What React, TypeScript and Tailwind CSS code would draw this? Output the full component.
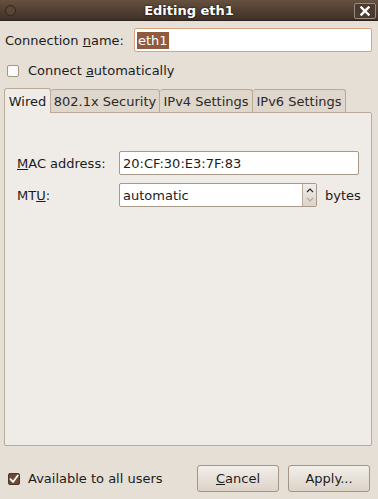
import React from 'react'

const font = { fontFamily: '"DejaVu Sans", "Noto Sans", sans-serif' }

function Tab({ label, active, w }: { label: string; active?: boolean; w: string }) {
  return active ? (
    <div className={`${w} h-[25px] -mb-px z-10 flex items-center justify-center rounded-t-[3px] border border-b-0 border-[#b9aa9a] bg-[#efebe7]`}>
      {label}
    </div>
  ) : (
    <div className={`${w} h-[23px] flex items-center justify-center rounded-t-[3px] border border-b-0 border-l-0 border-[#b9aa9a] bg-[#dfd6cc] text-[#2a2a2a]`}>
      {label}
    </div>
  )
}

function Checkbox({ checked }: { checked?: boolean }) {
  return checked ? (
    <div className="w-[12px] h-[12px] rounded-[2px] bg-[#6e4a36] border border-[#4f3426] flex items-center justify-center">
      <svg width="10" height="10" viewBox="0 0 10 10">
        <path d="M1.5 5.2 L4 8 L8.8 1.5" stroke="#fff" strokeWidth="1.8" fill="none" strokeLinecap="round" strokeLinejoin="round" />
      </svg>
    </div>
  ) : (
    <div className="w-[12px] h-[12px] rounded-[2px] bg-[#fbfaf9] border border-[#a49585]" />
  )
}

export default function App() {
  return (
    <div className="w-[378px] h-[499px] bg-[#e6dfd6] flex flex-col text-[13px] text-[#1c1c1c] leading-none overflow-hidden" style={font}>
      {/* Title bar */}
      <div className="h-[21px] relative flex items-center justify-center bg-gradient-to-b from-[#66513f] to-[#3f3027] border-b border-[#2d221b]">
        <div className="absolute left-[5px] top-[5px] w-[11px] h-[11px] rounded-full border border-[#2f241e] bg-[#5a4636]" />
        <span className="font-bold text-white" style={{ textShadow: '0 0 2px #000' }}>Editing eth1</span>
        <div className="absolute right-[2px] top-[3px] w-[22px] h-[16px] rounded-[2px] border border-[#9a8a7d] bg-[#4b3a2f] flex items-center justify-center">
          <svg width="10" height="10" viewBox="0 0 10 10">
            <path d="M1.5 1.5 L8.5 8.5 M8.5 1.5 L1.5 8.5" stroke="#fff" strokeWidth="2.4" strokeLinecap="square" />
          </svg>
        </div>
      </div>

      {/* Connection name */}
      <div className="mt-[7px] flex items-center pl-[5px] pr-[6px]">
        <span className="w-[129px]">Connection <u>n</u>ame:</span>
        <div className="flex-1 h-[24px] rounded-[2px] border border-[#d9a283] bg-white flex items-center pl-[2px]">
          <span className="bg-[#8f5a3d] text-white px-[1px] py-[2px]">eth1</span>
        </div>
      </div>

      {/* Connect automatically */}
      <div className="mt-[12px] flex items-center gap-[9px] pl-[7px]">
        <Checkbox />
        <span>Connect <u>a</u>utomatically</span>
      </div>

      {/* Tabs */}
      <div className="mt-[11px] mx-[4px] flex flex-col">
        <div className="flex items-end">
          <Tab label="Wired" active w="w-[47px]" />
          <Tab label="802.1x Security" w="w-[109px]" />
          <Tab label="IPv4 Settings" w="w-[93px]" />
          <Tab label="IPv6 Settings" w="w-[93px]" />
        </div>
        <div className="w-[368px] h-[334px] border border-[#b9aa9a] rounded-b-[2px] rounded-tr-[2px] bg-[#efebe7] pt-[38px] pl-[12px] pr-[4px] flex flex-col gap-[8px]">
          <div className="flex items-center">
            <span className="w-[102px] shrink-0"><u>M</u>AC address:</span>
            <div className="w-[240px] shrink-0 h-[24px] rounded-[2px] border border-[#a8998a] bg-white flex items-center pl-[3px]">20:CF:30:E3:7F:83</div>
          </div>
          <div className="flex items-center">
            <span className="w-[102px] shrink-0">MT<u>U</u>:</span>
            <div className="w-[198px] shrink-0 h-[24px] rounded-[2px] border border-[#a8998a] bg-white flex">
              <div className="flex-1 flex items-center pl-[3px]">automatic</div>
              <div className="w-[14px] border-l border-[#b9aa9a] bg-gradient-to-b from-[#f1ede9] to-[#ddd4ca] flex flex-col items-center justify-center">
                <svg width="8" height="6" viewBox="0 0 8 6" className="mb-[4px]">
                  <path d="M1 5 L4 2 L7 5" stroke="#2a2a2a" strokeWidth="1.2" fill="none" />
                </svg>
                <svg width="8" height="6" viewBox="0 0 8 6">
                  <path d="M1 1 L4 4 L7 1" stroke="#b5aaa0" strokeWidth="1.2" fill="none" />
                </svg>
              </div>
            </div>
            <span className="ml-[8px] shrink-0">bytes</span>
          </div>
        </div>
      </div>

      {/* Bottom row */}
      <div className="mt-[19px] flex items-center pl-[8px] pr-[8px]">
        <Checkbox checked />
        <span className="ml-[8px] flex-1">Available to all users</span>
        <div className="w-[82px] h-[27px] rounded-[3px] border border-[#a49585] bg-gradient-to-b from-[#f2eee9] to-[#ddd3c8] flex items-center justify-center">
          <span><u>C</u>ancel</span>
        </div>
        <div className="ml-[9px] w-[82px] h-[27px] rounded-[3px] border border-[#a49585] bg-gradient-to-b from-[#f2eee9] to-[#ddd3c8] flex items-center justify-center">
          <span>Apply...</span>
        </div>
      </div>
    </div>
  )
}
